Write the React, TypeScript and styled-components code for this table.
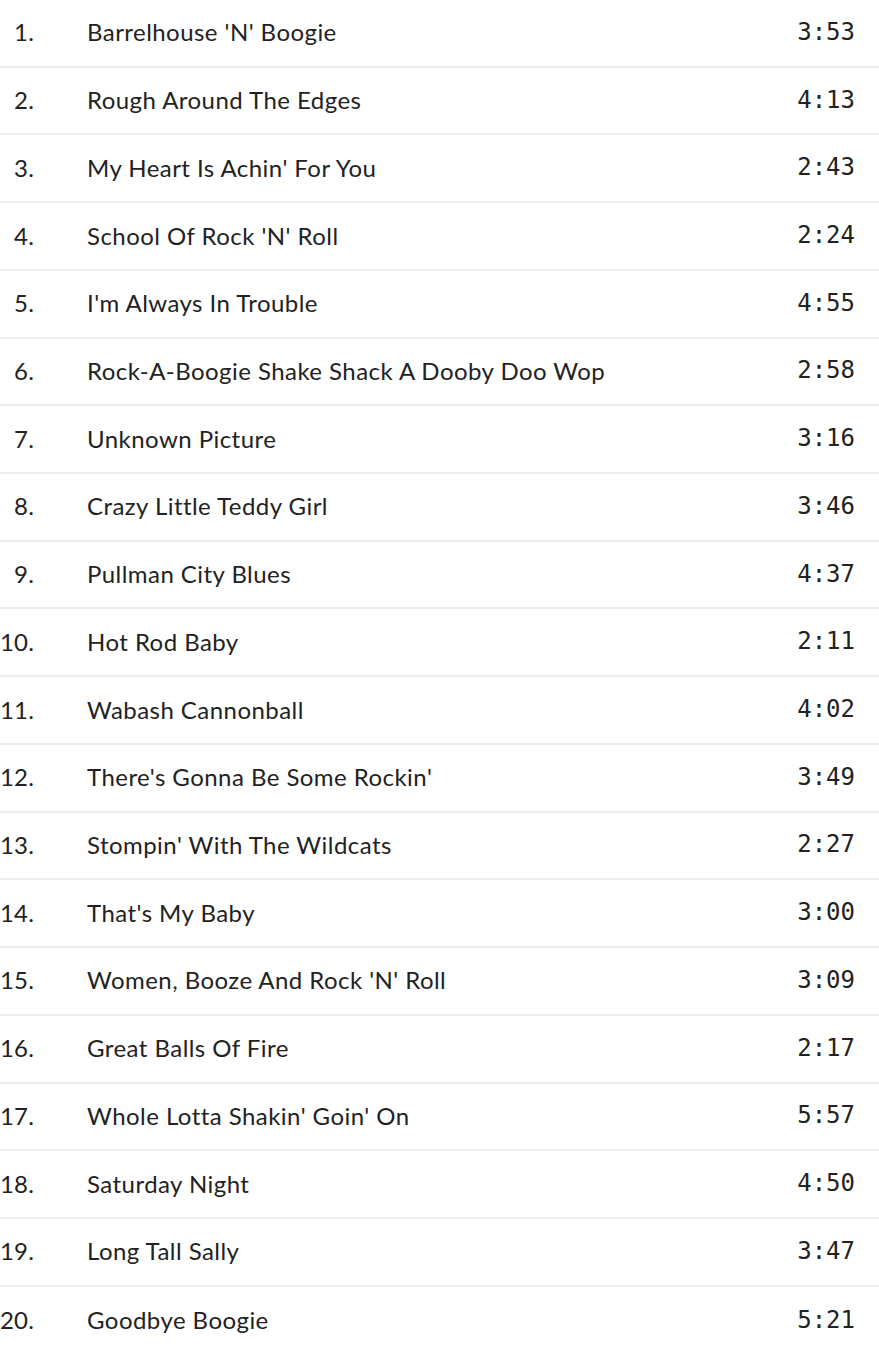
import styled, { createGlobalStyle } from 'styled-components';

const GlobalStyle = createGlobalStyle`
  html, body {
    margin: 0;
    padding: 0;
    background: #ffffff;
  }
  body {
    font-family: Lato, "Noto Sans", sans-serif;
    color: #222222;
  }
`;

const TrackList = styled.ol`
  list-style: none;
  margin: 0;
  padding: 0;
  width: 879px;
`;

const TrackRow = styled.li`
  display: grid;
  grid-template-columns: 34px 1fr auto;
  column-gap: 53px;
  align-items: center;
  box-sizing: border-box;
  height: 67.72px;
  padding: 0 24px 2px 0;
  border-bottom: 2px solid #ececec;

  &:last-child {
    border-bottom: none;
  }
`;

const TrackNumber = styled.span`
  font-size: 24px;
  letter-spacing: 0.2px;
  text-align: right;
  color: #222222;
`;

const TrackTitle = styled.span`
  font-size: 24px;
  letter-spacing: 0.45px;
  color: #222222;
`;

const TrackDuration = styled.span`
  font-family: "DejaVu Sans Mono", "Liberation Mono", monospace;
  font-size: 24px;
  color: #222222;
`;

const tracks: [string, string][] = [
  ["Barrelhouse 'N' Boogie", '3:53'],
  ['Rough Around The Edges', '4:13'],
  ["My Heart Is Achin' For You", '2:43'],
  ["School Of Rock 'N' Roll", '2:24'],
  ["I'm Always In Trouble", '4:55'],
  ['Rock-A-Boogie Shake Shack A Dooby Doo Wop', '2:58'],
  ['Unknown Picture', '3:16'],
  ['Crazy Little Teddy Girl', '3:46'],
  ['Pullman City Blues', '4:37'],
  ['Hot Rod Baby', '2:11'],
  ['Wabash Cannonball', '4:02'],
  ["There's Gonna Be Some Rockin'", '3:49'],
  ["Stompin' With The Wildcats", '2:27'],
  ["That's My Baby", '3:00'],
  ["Women, Booze And Rock 'N' Roll", '3:09'],
  ['Great Balls Of Fire', '2:17'],
  ["Whole Lotta Shakin' Goin' On", '5:57'],
  ['Saturday Night', '4:50'],
  ['Long Tall Sally', '3:47'],
  ['Goodbye Boogie', '5:21'],
];

export default function App() {
  return (
    <>
      <GlobalStyle />
      <TrackList>
        {tracks.map(([title, duration], i) => (
          <TrackRow key={title}>
            <TrackNumber>{i + 1}.</TrackNumber>
            <TrackTitle>{title}</TrackTitle>
            <TrackDuration>{duration}</TrackDuration>
          </TrackRow>
        ))}
      </TrackList>
    </>
  );
}
